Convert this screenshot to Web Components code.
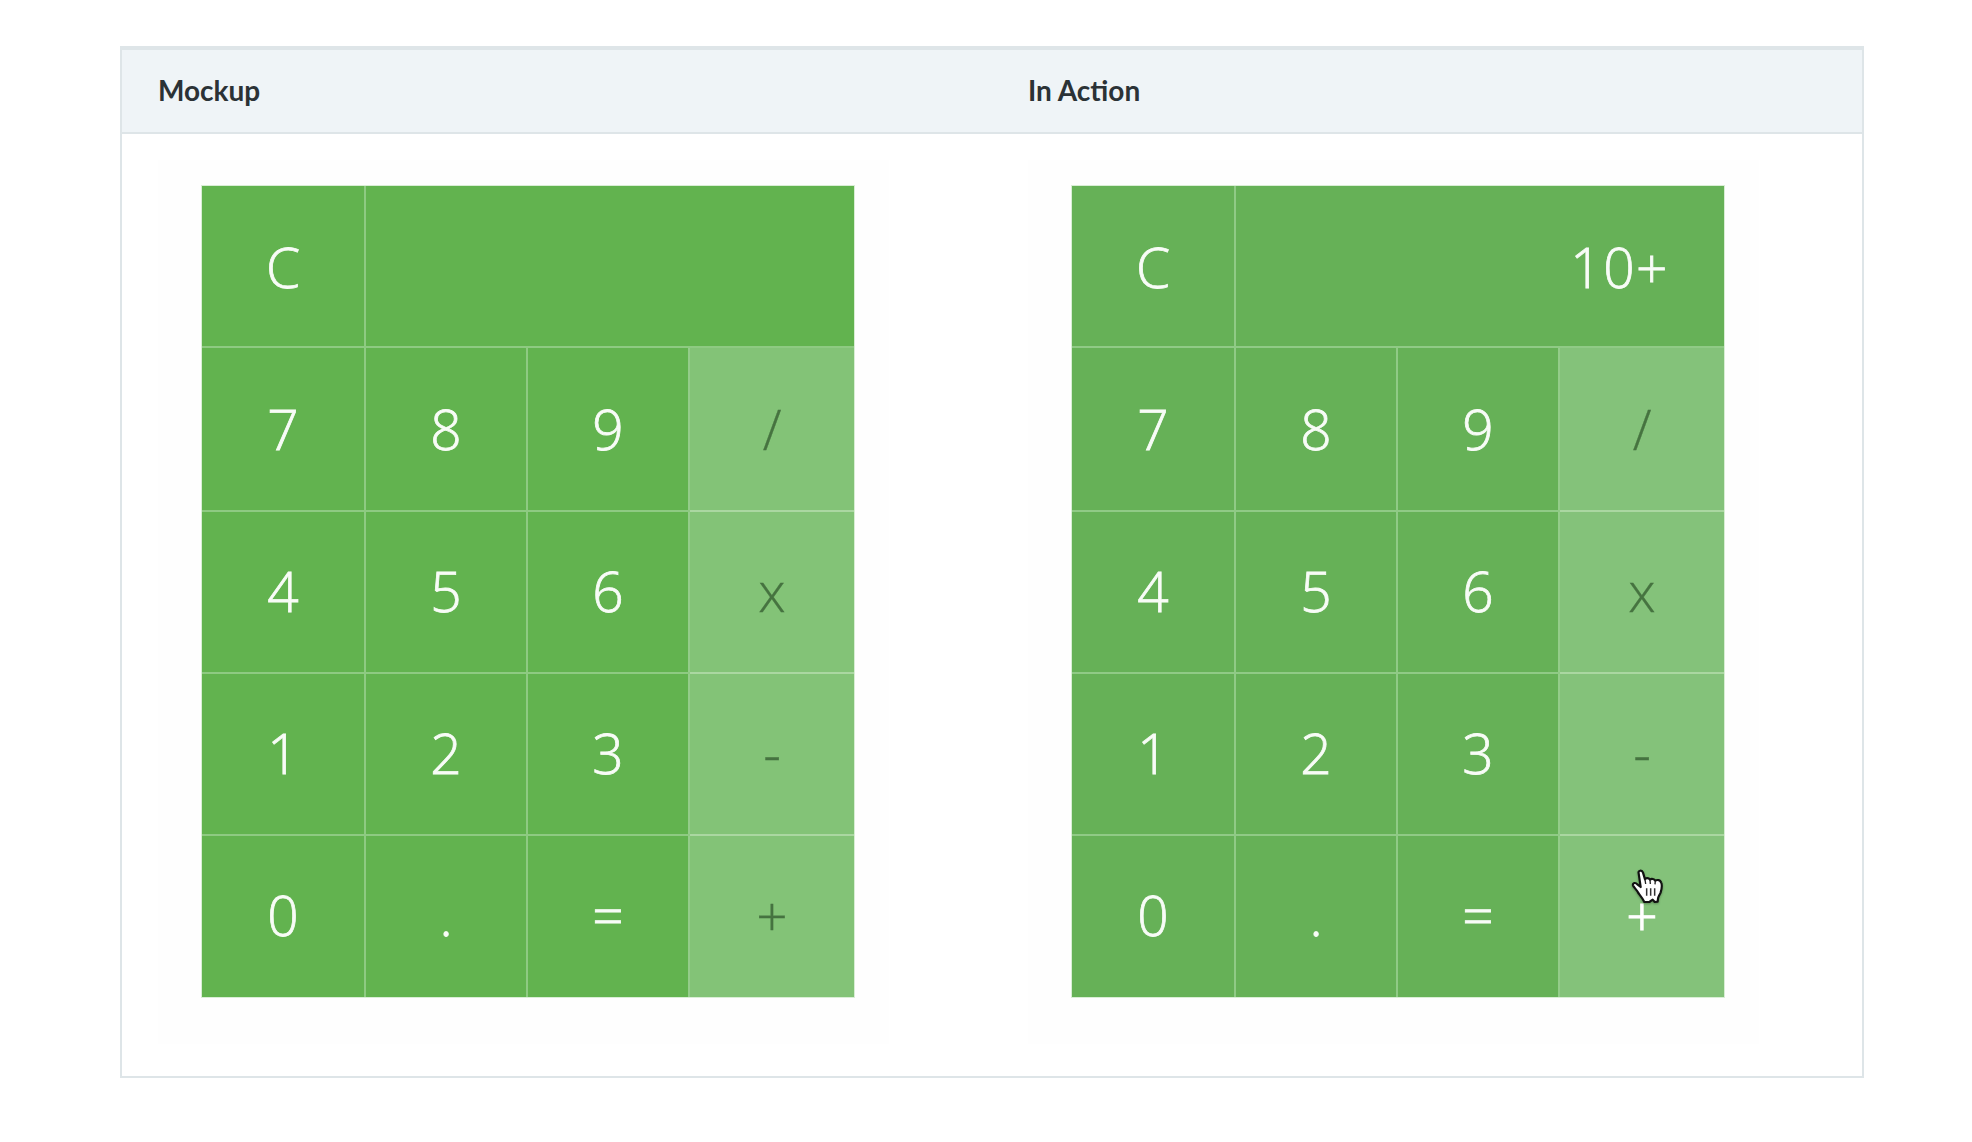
<!DOCTYPE html>
<html lang="en">
<head>
<meta charset="utf-8">
<title>Calculator</title>
<style>
body{margin:0;background:#fff;padding:46px 108px 0 120px;font-family:Lato,"Open Sans",sans-serif}
</style>
</head>
<body>
<compare-table>
<span slot="first-title">Mockup</span>
<span slot="second-title">In Action</span>
<calc-board slot="first"></calc-board>
<calc-board slot="second" display="10+" active="+" style="--key:#66b157;--op:#84c27a;--line:#90ca86"><hand-pointer></hand-pointer></calc-board>
</compare-table>
<script>
class CompareTable extends HTMLElement{
  constructor(){
    super();
    this.attachShadow({mode:'open'}).innerHTML=`<style>
:host{display:flex;flex-direction:column;box-sizing:border-box;width:1744px;height:1032px;border:2px solid #dee5e8;border-top-width:4px;background:#fff}
.head,.body{display:grid;grid-template-columns:870px 1fr}
.head{height:82px;background:#eff4f7;border-bottom:2px solid #dee5e8;align-items:center;font-weight:700;font-size:28px;line-height:40px;color:#2b3236}
.head>div{padding:0 0 3px 36px}
.body>div{padding:26px 0 0 36px}
.shot{box-sizing:border-box;width:731px;height:884px;background:#fefefe;padding:26px 0 0 44px}
</style>
<div class="head"><div><slot name="first-title"></slot></div><div><slot name="second-title"></slot></div></div>
<div class="body"><div><div class="shot"><slot name="first"></slot></div></div><div><div class="shot"><slot name="second"></slot></div></div></div>`;
  }
}
class CalcKey extends HTMLElement{
  constructor(){
    super();
    this.attachShadow({mode:'open'}).innerHTML=`<style>
:host{display:flex;align-items:center;justify-content:center;box-sizing:border-box;padding-bottom:2px;background:var(--key,#62b34f);color:#f8fcf7;font:300 55px/76px "Open Sans","Noto Sans",sans-serif;-webkit-text-stroke:.8px currentColor}
:host([kind=display]){grid-column:span 3;justify-content:flex-end;padding-right:55px;letter-spacing:1.5px}
:host([top]){padding-top:1px;padding-bottom:0}
:host([row="1"]){padding-bottom:0}
:host([row="4"]){padding-bottom:4px}
:host([kind=op]){background:var(--op,#83c377);color:#467340;-webkit-text-stroke-width:.3px;box-shadow:-2px 0 #94cc8a}
:host([rule]){box-shadow:-2px 0 #94cc8a,0 -2px #aad7a1}
:host([active]){color:#fff!important;-webkit-text-stroke-width:1px!important}
</style><slot></slot>`;
  }
}
class CalcBoard extends HTMLElement{
  connectedCallback(){
    const active=this.getAttribute('active');
    const keys=['7','8','9','/','4','5','6','x','1','2','3','-','0','.','=','+'];
    const cells=keys.map((k,i)=>{
      const op=i%4===3;
      return `<calc-key row="${Math.floor(i/4)+1}"${op?' kind="op"':''}${op&&i>3?' rule':''}${k===active?' active':''}>${k}</calc-key>`;
    }).join('');
    this.attachShadow({mode:'open'}).innerHTML=`<style>
:host{display:grid;position:relative;width:652px;height:811px;grid-template-columns:162px 160px 160px 164px;grid-template-rows:160px 162px 160px 160px 161px;gap:2px;background:var(--line,#8eca82);box-shadow:0 0 0 1px #d9eed5}
::slotted(hand-pointer){position:absolute;left:558px;top:682px}
</style><calc-key top>C</calc-key><calc-key top kind="display">${this.getAttribute('display')||''}</calc-key>${cells}<slot></slot>`;
  }
}
class HandPointer extends HTMLElement{
  constructor(){
    super();
    this.attachShadow({mode:'open'}).innerHTML=`<style>:host{display:block;width:34px;height:37px}svg{display:block;overflow:visible;filter:drop-shadow(0 1px 1px rgba(0,0,0,.3))}</style>
<svg width="34" height="37" viewBox="270 144 102 111">
<path d="M296 160C293 151 306 149 309 158L315 178C317 173 326 173 330 179C334 175 343 177 346 182C352 178 361 180 363 187C367 194 365 207 362 217C359 225 355 229 354 236L353 245L344 246L338 239L328 246L313 246C308 235 302 228 295 219C291 210 281 202 279 196C277 188 287 187 292 193L302 201Z" fill="#fff" stroke="#111" stroke-width="6.5" stroke-linejoin="round"/>
<path d="M315 178L317 192M330 179L331 192M346 182L345 193" fill="none" stroke="#222" stroke-width="4"/>
<path d="M320 205V227M332 205V227M344 205V227" fill="none" stroke="#333" stroke-width="4.5"/>
</svg>`;
  }
}
customElements.define('compare-table',CompareTable);
customElements.define('calc-key',CalcKey);
customElements.define('calc-board',CalcBoard);
customElements.define('hand-pointer',HandPointer);
</script>
</body>
</html>
